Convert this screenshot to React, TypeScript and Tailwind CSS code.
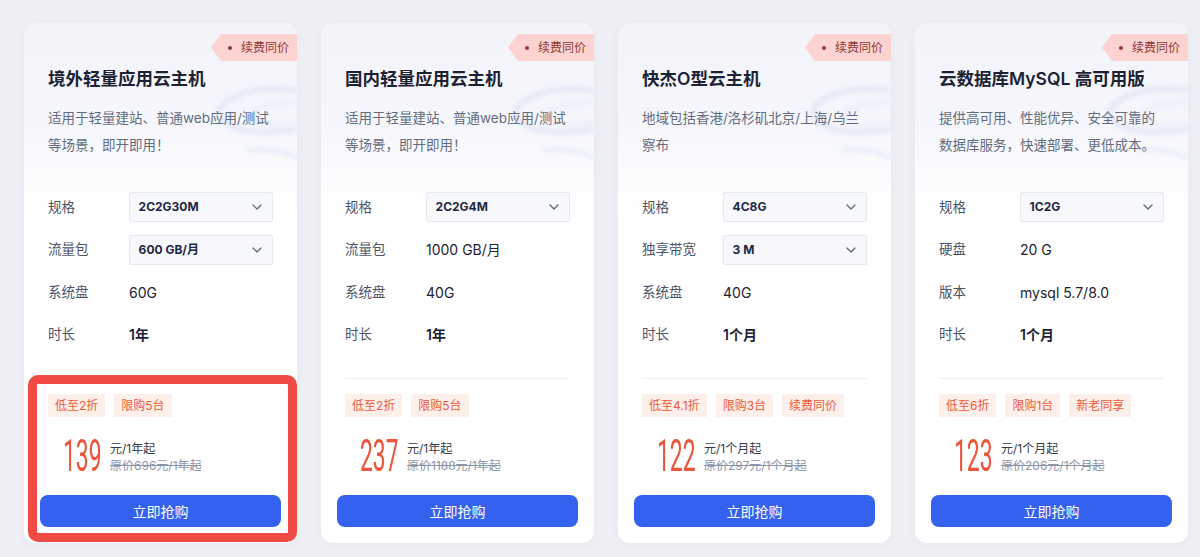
import React from "react";

type Spec = { label: string; value: string; select?: boolean; bold?: boolean };
type Card = {
  title: string;
  desc: string[];
  specs: Spec[];
  tags: string[];
  price: string;
  unit: string;
  orig: string;
};

const cards: Card[] = [
  {
    title: "境外轻量应用云主机",
    desc: ["适用于轻量建站、普通web应用/测试", "等场景，即开即用！"],
    specs: [
      { label: "规格", value: "2C2G30M", select: true },
      { label: "流量包", value: "600 GB/月", select: true },
      { label: "系统盘", value: "60G" },
      { label: "时长", value: "1年", bold: true },
    ],
    tags: ["低至2折", "限购5台"],
    price: "139",
    unit: "元/1年起",
    orig: "原价696元/1年起",
  },
  {
    title: "国内轻量应用云主机",
    desc: ["适用于轻量建站、普通web应用/测试", "等场景，即开即用！"],
    specs: [
      { label: "规格", value: "2C2G4M", select: true },
      { label: "流量包", value: "1000 GB/月" },
      { label: "系统盘", value: "40G" },
      { label: "时长", value: "1年", bold: true },
    ],
    tags: ["低至2折", "限购5台"],
    price: "237",
    unit: "元/1年起",
    orig: "原价1188元/1年起",
  },
  {
    title: "快杰O型云主机",
    desc: ["地域包括香港/洛杉矶北京/上海/乌兰", "察布"],
    specs: [
      { label: "规格", value: "4C8G", select: true },
      { label: "独享带宽", value: "3 M", select: true },
      { label: "系统盘", value: "40G" },
      { label: "时长", value: "1个月", bold: true },
    ],
    tags: ["低至4.1折", "限购3台", "续费同价"],
    price: "122",
    unit: "元/1个月起",
    orig: "原价297元/1个月起",
  },
  {
    title: "云数据库MySQL 高可用版",
    desc: ["提供高可用、性能优异、安全可靠的", "数据库服务，快速部署、更低成本。"],
    specs: [
      { label: "规格", value: "1C2G", select: true },
      { label: "硬盘", value: "20 G" },
      { label: "版本", value: "mysql 5.7/8.0" },
      { label: "时长", value: "1个月", bold: true },
    ],
    tags: ["低至6折", "限购1台", "新老同享"],
    price: "123",
    unit: "元/1个月起",
    orig: "原价206元/1个月起",
  },
];

function Chevron() {
  return (
    <svg width="10" height="6" viewBox="0 0 10 6" fill="none">
      <path d="M1 1l4 4 4-4" stroke="#5b6374" strokeWidth="1.2" strokeLinecap="round" strokeLinejoin="round" />
    </svg>
  );
}

function Swirl() {
  return (
    <svg
      className="pointer-events-none absolute right-0 top-[30px] blur-[2px]"
      width="100"
      height="110"
      viewBox="0 0 100 110"
      fill="none"
    >
      <path d="M100 38 C 65 30, 22 44, 22 60 C 22 76, 60 84, 100 76" stroke="#d3ddf2" strokeWidth="5" opacity="0.55" />
      <path d="M100 50 C 78 48, 52 55, 53 64 C 55 72, 80 74, 100 70" stroke="#dbe4f5" strokeWidth="4" opacity="0.45" />
      <path d="M50 98 C 65 94, 85 98, 100 104" stroke="#d7e0f3" strokeWidth="5" opacity="0.45" />
    </svg>
  );
}

function ProductCard({ c }: { c: Card }) {
  return (
    <div className="relative flex h-[520px] w-[273px] shrink-0 flex-col overflow-hidden rounded-xl bg-[linear-gradient(180deg,#f2f4fa_0%,#f6f7fc_20%,#ffffff_36%)] px-6 pt-[43px] shadow-[0_2px_12px_rgba(40,50,90,0.04)]">
      <Swirl />
      <div className="absolute right-0 top-[11px] flex h-[27px] w-[86px] items-center bg-[#fdd3d1] pl-[17px] [clip-path:polygon(10px_0,100%_0,100%_100%,10px_100%,0_50%)]">
        <span className="h-[4px] w-[4px] rounded-full bg-[#8e3a36]" />
        <span className="ml-[9px] text-[12px] leading-none text-[#8e3a36]">续费同价</span>
      </div>

      <div className="relative text-[17.5px] font-semibold leading-[26px] text-[#1c2233]">{c.title}</div>
      <div className="relative mt-[12.5px] text-[13.5px] leading-[27px] text-[#636c7f]">
        {c.desc.map((d) => (
          <div key={d} className="whitespace-nowrap">
            {d}
          </div>
        ))}
      </div>

      <div className="mt-[33.5px] flex flex-col gap-[12.5px]">
        {c.specs.map((s) => (
          <div key={s.label} className="flex h-[30px] items-center">
            <div className="w-[81px] text-[13.5px] text-[#4b5366]">{s.label}</div>
            {s.select ? (
              <div className="flex h-[30px] w-[145px] items-center justify-between rounded-[2px] border border-[#e5e8ef] bg-[#f7f8fb] pl-[9px] pr-[10px]">
                <span className="text-[12px] font-bold text-[#1e2842]">{s.value}</span>
                <Chevron />
              </div>
            ) : (
              <div className={`text-[14px] text-[#1c2233] ${s.bold ? "font-semibold" : "font-normal"}`}>{s.value}</div>
            )}
          </div>
        ))}
      </div>

      <div className="mt-[28.5px] h-px bg-[#eceef3]" />

      <div className="mt-[15px] flex gap-[9px]">
        {c.tags.map((t) => (
          <div key={t} className="flex h-[23px] items-center bg-[#fdefe9] px-[7px] text-[12px] text-[#ee5a3a]">
            {t}
          </div>
        ))}
      </div>

      <div className="mt-[22px] flex h-[35px] items-center pl-[15px]">
        <div className="h-[35px] w-[39px]">
          <span className="inline-block origin-left scale-x-[0.52] font-['Roboto'] text-[44px] font-normal leading-[35px] text-[#ec553a]">
            {c.price}
          </span>
        </div>
        <div className="ml-[8px] flex flex-col text-[12px] leading-[17px]">
          <span className="text-[#333a4a]">{c.unit}</span>
          <span className="text-[#8c95a8] line-through">{c.orig}</span>
        </div>
      </div>

      <button className="-mx-2 mt-[21px] h-[32px] rounded-lg bg-[#3461ee] text-[14px] text-white">立即抢购</button>
    </div>
  );
}

export default function App() {
  return (
    <div className="h-[557px] w-[1200px] overflow-hidden bg-[#eef0f5] font-[Inter,'Noto_Sans_CJK_SC',sans-serif]">
      <div className="flex gap-6 pl-6 pt-[23px]">
        {cards.map((c, i) => (
          <div key={c.title} className="relative">
            <ProductCard c={c} />
            {i === 0 && (
              <div className="pointer-events-none absolute bottom-[1px] left-[4px] right-0 top-[352px] rounded-[10px] border-[9px] border-[#f04a44]" />
            )}
          </div>
        ))}
      </div>
    </div>
  );
}
